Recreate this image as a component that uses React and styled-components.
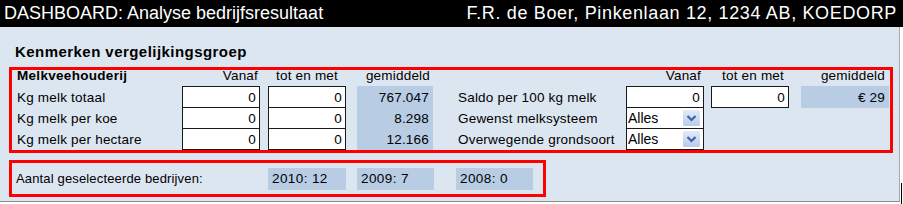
import React from 'react';
import styled, { createGlobalStyle } from 'styled-components';

const Global = createGlobalStyle`
  html, body { margin: 0; padding: 0; background: #fff; }
  body { font-family: "Liberation Sans", Arial, sans-serif; color: #000; }
  * { box-sizing: border-box; }
`;

const Page = styled.div`
  width: 903px;
  height: 204px;
  background: #fff;
  overflow: hidden;
`;

const Header = styled.header`
  height: 27px;
  background: #000;
  color: #fff;
  display: flex;
  align-items: center;
  justify-content: space-between;
  padding: 0 6px 0 4px;
  font-size: 18px;
  white-space: nowrap;
`;

const HeaderText = styled.span`
  letter-spacing: ${p => p.$ls || 0}px;
`;

const Body = styled.div`
  display: flex;
  align-items: flex-start;
`;

const Panel = styled.main`
  width: 900px;
  height: 175px;
  background: #dce6f1;
  border-right: 1px solid #a9a9a9;
  border-bottom: 1px solid #8a8a8a;
  padding: 17px 0 0 9px;
`;

const Edge = styled.div`
  width: 3px;
  height: 177px;
  display: flex;
  flex-direction: column;
  justify-content: flex-end;
  padding-left: 1px;
`;

const EdgeLine = styled.div`
  width: 1px;
  height: 21px;
  background: #000;
`;

const Title = styled.h2`
  margin: 0 0 7px 6px;
  font-size: 15px;
  letter-spacing: 0.45px;
  line-height: 16px;
  font-weight: bold;
`;

const RedBox = styled.section`
  border: 3px solid #ff0000;
  width: ${p => p.$w}px;
  height: ${p => p.$h}px;
  margin-bottom: 7px;
`;

const Grid = styled.div`
  display: grid;
  grid-template-columns: 165px 78px 8px 78px 11px 76px 25px 168px 78px 7px 78px 12px 88px;
  grid-template-rows: 16px 22px 21px 21px;
  padding-left: 5px;
  font-size: 13.5px;
  letter-spacing: 0.2px;
`;

const Cell = styled.div`
  grid-column: ${p => p.$c};
  grid-row: ${p => p.$r};
  display: flex;
  align-items: center;
  white-space: nowrap;
`;

const Head = styled(Cell)`
  line-height: 12px;
  align-items: flex-start;
  justify-content: ${p => p.$align || 'flex-end'};
  padding-right: ${p => p.$pr || 0}px;
  padding-left: ${p => p.$pl || 0}px;
  font-weight: ${p => (p.$bold ? 'bold' : 'normal')};
  letter-spacing: ${p => (p.$bold ? '0.3px' : '0.2px')};
`;

const Label = styled(Cell)``;

const NumBox = styled(Cell)`
  background: #fff;
  border: 1px solid #1a1a1a;
  border-top-width: ${p => (p.$first ? 1 : 0)}px;
  justify-content: flex-end;
  padding-right: 3px;
`;

const Avg = styled(Cell)`
  background: #b8cce4;
  justify-content: flex-end;
  padding-right: 4px;
`;

const SelectBox = styled(Cell)`
  background: #fff;
  border: 1px solid #1a1a1a;
  border-top-width: 0;
  justify-content: space-between;
  padding: 0 3px 0 1px;
  font-size: 14px;
  letter-spacing: 0;
`;

const DropButton = styled.span`
  width: 17px;
  height: 16px;
  display: flex;
  align-items: center;
  justify-content: center;
  background: linear-gradient(#e3ebf8, #b9cbea);
  border-radius: 1px;
`;

const CountRow = styled.div`
  height: 100%;
  display: flex;
  align-items: center;
  font-size: 13px;
  padding-left: 4px;
  letter-spacing: 0.15px;
`;

const CountLabel = styled.div`
  width: 252px;
  white-space: nowrap;
`;

const CountCell = styled.div`
  width: ${p => p.$w}px;
  margin-right: ${p => p.$mr}px;
  height: 22px;
  background: #b8cce4;
  display: flex;
  align-items: center;
  padding-left: 4px;
  white-space: nowrap;
  font-size: 13.5px;
  letter-spacing: 0.4px;
`;

const Chevron = () => (
  <svg width="11" height="8" viewBox="0 0 11 8">
    <polyline points="1.5,2 5.5,6 9.5,2" fill="none" stroke="#3e62a6" strokeWidth="2.2" />
  </svg>
);

const Dropdown = ({ c, r, value }) => (
  <SelectBox $c={c} $r={r}>
    <span>{value}</span>
    <DropButton>
      <Chevron />
    </DropButton>
  </SelectBox>
);

const leftRows = [
  { label: 'Kg melk totaal', avg: '767.047' },
  { label: 'Kg melk per koe', avg: '8.298' },
  { label: 'Kg melk per hectare', avg: '12.166' },
];

export default function App() {
  return (
    <Page>
      <Global />
      <Header>
        <HeaderText>DASHBOARD: Analyse bedrijfsresultaat</HeaderText>
        <HeaderText $ls={0.65}>F.R. de Boer, Pinkenlaan 12, 1234 AB, KOEDORP</HeaderText>
      </Header>
      <Body>
        <Panel>
          <Title>Kenmerken vergelijkingsgroep</Title>
          <RedBox $w={884} $h={86}>
            <Grid>
              <Head $c={1} $r={1} $align="flex-start" $bold>Melkveehouderij</Head>
              <Head $c={2} $r={1} $pr={2}>Vanaf</Head>
              <Head $c={4} $r={1} $align="center">tot en met</Head>
              <Head $c={6} $r={1} $pr={3}>gemiddeld</Head>
              <Head $c={9} $r={1} $pr={3}>Vanaf</Head>
              <Head $c={11} $r={1} $align="center" $pl={6}>tot en met</Head>
              <Head $c={13} $r={1} $pr={4}>gemiddeld</Head>

              {leftRows.map((row, i) => (
                <React.Fragment key={row.label}>
                  <Label $c={1} $r={i + 2}>{row.label}</Label>
                  <NumBox $c={2} $r={i + 2} $first={i === 0}>0</NumBox>
                  <NumBox $c={4} $r={i + 2} $first={i === 0}>0</NumBox>
                  <Avg $c={6} $r={i + 2}>{row.avg}</Avg>
                </React.Fragment>
              ))}

              <Label $c={8} $r={2}>Saldo per 100 kg melk</Label>
              <NumBox $c={9} $r={2} $first>0</NumBox>
              <NumBox $c={11} $r={2} $first>0</NumBox>
              <Avg $c={13} $r={2}>€ 29</Avg>

              <Label $c={8} $r={3}>Gewenst melksysteem</Label>
              <Dropdown c={9} r={3} value="Alles" />
              <Label $c={8} $r={4}>Overwegende grondsoort</Label>
              <Dropdown c={9} r={4} value="Alles" />
            </Grid>
          </RedBox>
          <RedBox $w={537} $h={37}>
            <CountRow>
              <CountLabel>Aantal geselecteerde bedrijven:</CountLabel>
              <CountCell $w={78} $mr={11}>2010: 12</CountCell>
              <CountCell $w={77} $mr={22}>2009: 7</CountCell>
              <CountCell $w={77} $mr={0}>2008: 0</CountCell>
            </CountRow>
          </RedBox>
        </Panel>
        <Edge>
          <EdgeLine />
        </Edge>
      </Body>
    </Page>
  );
}
